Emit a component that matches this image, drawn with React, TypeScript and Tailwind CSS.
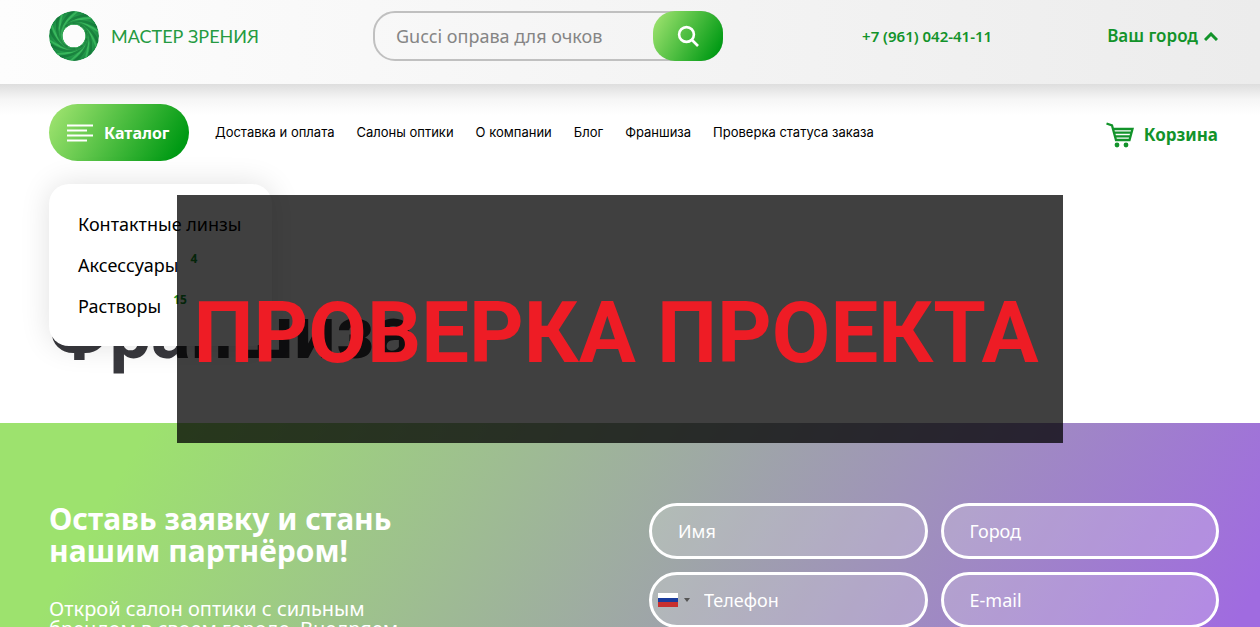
import { useState } from 'react';

const navLinks = ['Доставка и оплата', 'Салоны оптики', 'О компании', 'Блог', 'Франшиза', 'Проверка статуса заказа'];

const catalog = [
  { title: 'Контактные линзы' },
  { title: 'Аксессуары', count: 4 },
  { title: 'Растворы', count: 15 },
];

const blades = Array.from({ length: 10 }, (_, i) => i * 36);

const fieldClass =
  'h-14 w-full rounded-[28px] border-[3px] border-white bg-white/20 text-[18px] text-white placeholder:text-white placeholder:opacity-100 focus:outline-none';

function LogoMark() {
  return (
    <svg width="50" height="50" viewBox="-25 -25 50 50" aria-hidden="true">
      <defs>
        <clipPath id="ring">
          <path clipRule="evenodd" d="M-25 0A25 25 0 1 1 25 0A25 25 0 1 1 -25 0ZM-11.5 0A11.5 11.5 0 1 0 11.5 0A11.5 11.5 0 1 0 -11.5 0Z" />
        </clipPath>
        <radialGradient id="ringFill" gradientUnits="userSpaceOnUse" cx="0" cy="0" r="25">
          <stop offset="0.45" stopColor="#35b558" />
          <stop offset="1" stopColor="#1a8a43" />
        </radialGradient>
      </defs>
      <g clipPath="url(#ring)">
        <circle r="25" fill="url(#ringFill)" />
        {blades.map((angle) => (
          <g key={angle} transform={`rotate(${angle})`} fill="none">
            <path d="M-11 5C-15 -7 -7 -19 14 -21" stroke="#0b6530" strokeWidth="2.6" opacity="0.5" />
            <path d="M-11 2C-13.5 -9 -4 -17.5 17 -18" stroke="#43c465" strokeWidth="1.8" opacity="0.65" />
          </g>
        ))}
      </g>
    </svg>
  );
}

function CartIcon() {
  return (
    <svg width="28" height="26" viewBox="0 0 28 26" fill="none" stroke="#12932a" strokeWidth="2.3" aria-hidden="true">
      <path d="M0.5 1.5L6 3.5L10 18H23.5L26.5 7H7M8.5 10.6H25M9.5 14.3H24" />
      <circle cx="11" cy="23" r="2.4" fill="#12932a" stroke="none" />
      <circle cx="20" cy="23" r="2.4" fill="#12932a" stroke="none" />
    </svg>
  );
}

export default function App() {
  const [query, setQuery] = useState('');

  return (
    <div className="h-screen overflow-hidden bg-white font-['Noto_Sans',sans-serif] text-black">
      {/* top bar */}
      <header className="flex h-[84px] items-start bg-linear-to-r from-[#fdfdfd] to-[#ececec] pr-[42px] pl-[49px]">
        <a href="#" className="mt-[11px] flex w-[324px] items-center gap-3 font-['Lato','Noto_Sans',sans-serif] text-[18px] text-[#259a41]">
          <LogoMark />
          МАСТЕР ЗРЕНИЯ
        </a>
        <form className="mt-[11px] flex h-[50px] w-[350px] rounded-[22px] border-2 border-[#c0c0c0]" onSubmit={(e) => e.preventDefault()}>
          <input
            type="search"
            aria-label="Поиск"
            value={query}
            onChange={(e) => setQuery(e.target.value)}
            placeholder="Gucci оправа для очков"
            className="min-w-0 flex-1 bg-transparent pl-[21px] text-[18px] placeholder:text-[#858585] focus:outline-none"
          />
          <button
            type="submit"
            aria-label="Найти"
            className="-m-0.5 flex w-[70px] items-center justify-center rounded-[22px] bg-[linear-gradient(120deg,#9de26e_5%,#009a14_90%)]"
          >
            <svg width="22" height="22" viewBox="0 0 22 22" fill="none" stroke="white" strokeWidth="2.6" aria-hidden="true">
              <circle cx="9.5" cy="9.5" r="7.4" />
              <path d="M15 15L21 21" />
            </svg>
          </button>
        </form>
        <a href="tel:+79610424111" className="mt-6 ml-auto text-[15px] leading-6 font-semibold text-[#12932a]">
          +7 (961) 042-41-11
        </a>
        <button type="button" className="mt-6 ml-[115px] flex items-center gap-1.5 text-[17px] leading-6 font-semibold text-[#12932a]">
          Ваш город
          <svg width="14" height="9" viewBox="0 0 14 9" fill="none" stroke="currentColor" strokeWidth="3" aria-hidden="true">
            <path d="M1 8L7 2L13 8" />
          </svg>
        </button>
      </header>

      {/* menu */}
      <div className="flex items-center bg-linear-to-b from-[#dedede] via-[#f6f6f6] via-20% to-white to-40% pt-5 pr-[42px] pl-[49px]">
        <div className="relative z-10">
          <button
            type="button"
            className="flex h-[57px] w-[140px] items-center gap-2.5 rounded-full bg-[linear-gradient(120deg,#9de26e_5%,#009a14_90%)] pl-[18px] text-[16px] font-bold text-white"
          >
            <svg width="27" height="18" viewBox="0 0 27 18" stroke="white" strokeWidth="2" aria-hidden="true">
              <path d="M0 1.5H26M0 6.5H20M0 11.5H26M0 16.5H20" />
            </svg>
            Каталог
          </button>
          <ul className="absolute top-20 left-0 w-[223px] space-y-[17px] rounded-[20px] bg-white px-[29px] py-7 text-[18px] leading-6 shadow-[0_0_30px_rgba(0,0,0,0.12)]">
            {catalog.map((item) => (
              <li key={item.title} className="whitespace-nowrap">
                <a href="#" className="flex items-start">
                  {item.title}
                  {item.count && <sup className="top-0 ml-3 text-[12px] leading-3 font-bold text-[#12932a]">{item.count}</sup>}
                </a>
              </li>
            ))}
          </ul>
        </div>
        <nav className="ml-[26px] flex gap-[22px] font-['Inter','Noto_Sans',sans-serif] text-[13px]">
          {navLinks.map((link) => (
            <a key={link} href="#">
              {link}
            </a>
          ))}
        </nav>
        <a href="#" className="ml-auto flex items-center gap-2.5 pt-1 text-[17px] font-bold text-[#12932a]">
          <CartIcon />
          Корзина
        </a>
      </div>

      <h1 className="mt-[127px] h-[135px] pl-[49px] font-['Roboto','Noto_Sans',sans-serif] text-[74px] leading-[90px] font-bold text-[#38383d]">Франшиза</h1>

      {/* franchise request */}
      <section className="flex h-[420px] items-start justify-between bg-[linear-gradient(120deg,#9de26e_10%,#a06be0_90%)] pt-20 pr-[41px] pl-[49px] text-white">
        <div className="w-[370px]">
          <h2 className="text-[30px] leading-8 font-bold">Оставь заявку и стань нашим партнёром!</h2>
          <p className="mt-8 text-[20px] leading-5">Открой салон оптики с сильным брендом в своем городе. Внедряем</p>
        </div>
        <form className="grid w-[570px] grid-cols-2 gap-[13px]">
          <input aria-label="Имя" placeholder="Имя" className={`${fieldClass} px-[26px]`} />
          <input aria-label="Город" placeholder="Город" className={`${fieldClass} px-[26px]`} />
          <div className="relative">
            <input type="tel" aria-label="Телефон" placeholder="Телефон" className={`${fieldClass} pr-5 pl-[52px]`} />
            <button type="button" aria-label="Код страны" className="absolute top-0 left-[9px] flex h-full items-center gap-1.5">
              <svg width="20" height="14" viewBox="0 0 20 14" aria-hidden="true">
                <path fill="#fff" d="M0 0H20V5H0Z" />
                <path fill="#1b3c9c" d="M0 5H20V9H0Z" />
                <path fill="#c8302f" d="M0 9H20V14H0Z" />
              </svg>
              <svg width="6" height="4" viewBox="0 0 6 4" aria-hidden="true">
                <path fill="#555" d="M0 0H6L3 4Z" />
              </svg>
            </button>
          </div>
          <input type="email" aria-label="E-mail" placeholder="E-mail" className={`${fieldClass} px-[26px]`} />
        </form>
      </section>

      {/* notice over the page */}
      <div className="absolute top-[195px] left-[177px] z-20 flex h-[248px] w-[886px] items-center justify-center bg-black/75 pt-7 pr-2 font-['Roboto','Noto_Sans',sans-serif] text-[85px] leading-none font-bold whitespace-nowrap text-[#ee1c25]">
        ПРОВЕРКА ПРОЕКТА
      </div>
    </div>
  );
}
